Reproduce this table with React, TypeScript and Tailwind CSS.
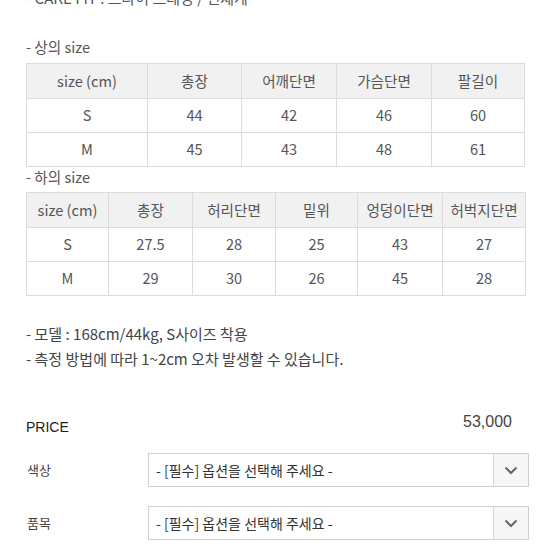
import React from "react";

const font = { fontFamily: '"Noto Sans CJK KR", "Noto Sans", sans-serif' };

function SizeTable({ widths, rows }: { widths: number[]; rows: string[][] }) {
  return (
    <table className="border-collapse table-fixed text-[14.6px] text-[#555]" style={{ width: widths.reduce((a, b) => a + b, 0) }}>
      <colgroup>
        {widths.map((w, i) => (
          <col key={i} style={{ width: w }} />
        ))}
      </colgroup>
      <tbody>
        {rows.map((r, ri) => (
          <tr key={ri} className={ri === 0 ? "h-[35px] bg-[#f1f1f1]" : "h-[34px] bg-white"}>
            {r.map((c, ci) => (
              <td key={ci} className="border border-[#dcdcdc] text-center p-0 leading-none">
                {c}
              </td>
            ))}
          </tr>
        ))}
      </tbody>
    </table>
  );
}

function Select() {
  return (
    <div className="flex h-[34px] w-[381px] border border-[#cfcfcf] bg-white">
      <div className="flex-1 flex items-center pl-[7px] text-[14px] text-[#333]">
        - [필수] 옵션을 선택해 주세요 -
      </div>
      <div className="w-[35px] border-l border-[#d6d6d6] bg-[#f6f6f6] flex items-center justify-center">
        <svg width="14" height="9" viewBox="0 0 14 9">
          <path d="M1.5 1.5 L7 7 L12.5 1.5" fill="none" stroke="#666" strokeWidth="2" />
        </svg>
      </div>
    </div>
  );
}

export default function App() {
  return (
    <div className="w-[554px] h-[554px] overflow-hidden bg-white relative" style={font}>
      <div className="pl-[26px]">
        <div className="-mt-[12px] h-[20px] leading-[20px] text-[15px] text-[#555]">- CAKE FIT : 브라이 드레싱 / 신세계</div>
        <div className="mt-[29px] h-[20px] leading-[20px] text-[14.6px] text-[#555]">- 상의 size</div>
        <div className="mt-[6px]">
          <SizeTable
            widths={[121, 94, 95, 95, 93]}
            rows={[
              ["size (cm)", "총장", "어깨단면", "가슴단면", "팔길이"],
              ["S", "44", "42", "46", "60"],
              ["M", "45", "43", "48", "61"],
            ]}
          />
        </div>
        <div className="mt-0 h-[20px] leading-[20px] text-[14.6px] text-[#555]">- 하의 size</div>
        <div className="mt-[5px]">
          <SizeTable
            widths={[82, 84, 83, 82, 85, 83]}
            rows={[
              ["size (cm)", "총장", "허리단면", "밑위", "엉덩이단면", "허벅지단면"],
              ["S", "27.5", "28", "25", "43", "27"],
              ["M", "29", "30", "26", "45", "28"],
            ]}
          />
        </div>
        <div className="mt-[25px] text-[15px] text-[#444] leading-[25px]">
          <div>- 모델 : 168cm/44kg, S사이즈 착용</div>
          <div>- 측정 방법에 따라 1~2cm 오차 발생할 수 있습니다.</div>
        </div>
      </div>
      <div className="pl-[26px] pr-[42px] mt-[44px] flex justify-between items-start" style={{ fontFamily: '"Liberation Sans", "Noto Sans CJK KR", sans-serif' }}>
        <div className="text-[14px] text-[#222] pt-[4px] leading-[16px]">PRICE</div>
        <div className="text-[16px] text-[#444] leading-[16px] -mt-[1px]">53,000</div>
      </div>
      <div className="pl-[27px] mt-[18px] flex flex-col gap-[19px]">
        <div className="flex items-center">
          <div className="w-[121px] text-[13px] text-[#444]">색상</div>
          <Select />
        </div>
        <div className="flex items-center">
          <div className="w-[121px] text-[13px] text-[#444]">품목</div>
          <Select />
        </div>
      </div>
    </div>
  );
}
